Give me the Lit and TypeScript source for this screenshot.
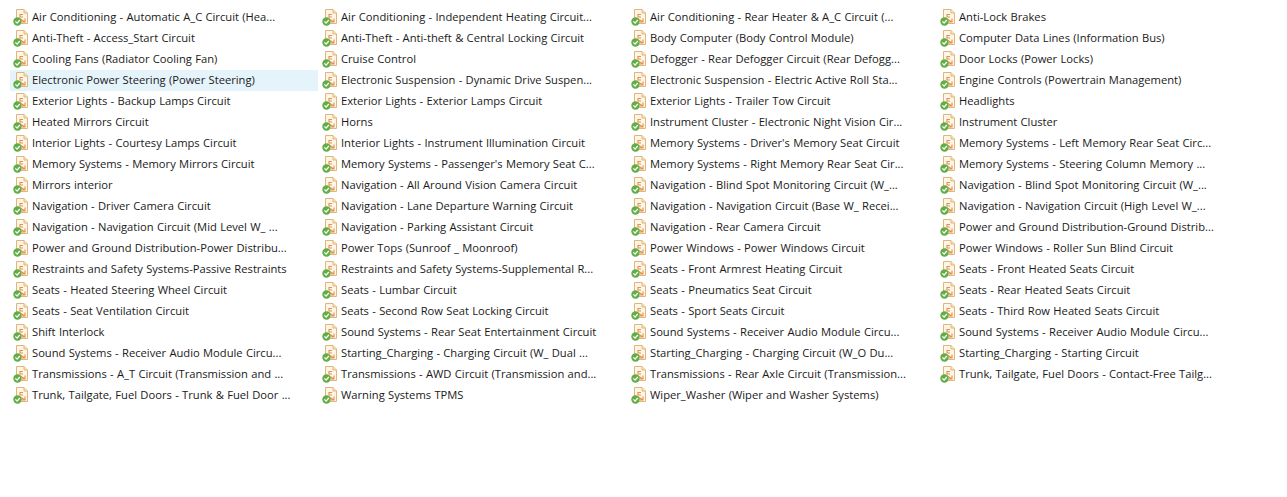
import { LitElement, html, css, svg } from "lit";
import { customElement } from "lit/decorators.js";

const items = [
"Air Conditioning - Automatic A_C Circuit (Hea...","Anti-Theft - Access_Start Circuit","Cooling Fans (Radiator Cooling Fan)","Electronic Power Steering (Power Steering)","Exterior Lights - Backup Lamps Circuit","Heated Mirrors Circuit","Interior Lights - Courtesy Lamps Circuit","Memory Systems - Memory Mirrors Circuit","Mirrors interior","Navigation - Driver Camera Circuit","Navigation - Navigation Circuit (Mid Level W_ ...","Power and Ground Distribution-Power Distribu...","Restraints and Safety Systems-Passive Restraints","Seats - Heated Steering Wheel Circuit","Seats - Seat Ventilation Circuit","Shift Interlock","Sound Systems - Receiver Audio Module Circu...","Transmissions - A_T Circuit (Transmission and ...","Trunk, Tailgate, Fuel Doors - Trunk & Fuel Door ...",
"Air Conditioning - Independent Heating Circuit...","Anti-Theft - Anti-theft & Central Locking Circuit","Cruise Control","Electronic Suspension - Dynamic Drive Suspen...","Exterior Lights - Exterior Lamps Circuit","Horns","Interior Lights - Instrument Illumination Circuit","Memory Systems - Passenger's Memory Seat C...","Navigation - All Around Vision Camera Circuit","Navigation - Lane Departure Warning Circuit","Navigation - Parking Assistant Circuit","Power Tops (Sunroof _ Moonroof)","Restraints and Safety Systems-Supplemental R...","Seats - Lumbar Circuit","Seats - Second Row Seat Locking Circuit","Sound Systems - Rear Seat Entertainment Circuit","Starting_Charging - Charging Circuit (W_ Dual ...","Transmissions - AWD Circuit (Transmission and...","Warning Systems TPMS",
"Air Conditioning - Rear Heater & A_C Circuit (...","Body Computer (Body Control Module)","Defogger - Rear Defogger Circuit (Rear Defogg...","Electronic Suspension - Electric Active Roll Sta...","Exterior Lights - Trailer Tow Circuit","Instrument Cluster - Electronic Night Vision Cir...","Memory Systems - Driver's Memory Seat Circuit","Memory Systems - Right Memory Rear Seat Cir...","Navigation - Blind Spot Monitoring Circuit (W_...","Navigation - Navigation Circuit (Base W_ Recei...","Navigation - Rear Camera Circuit","Power Windows - Power Windows Circuit","Seats - Front Armrest Heating Circuit","Seats - Pneumatics Seat Circuit","Seats - Sport Seats Circuit","Sound Systems - Receiver Audio Module Circu...","Starting_Charging - Charging Circuit (W_O Du...","Transmissions - Rear Axle Circuit (Transmission...","Wiper_Washer (Wiper and Washer Systems)",
"Anti-Lock Brakes","Computer Data Lines (Information Bus)","Door Locks (Power Locks)","Engine Controls (Powertrain Management)","Headlights","Instrument Cluster","Memory Systems - Left Memory Rear Seat Circ...","Memory Systems - Steering Column Memory ...","Navigation - Blind Spot Monitoring Circuit (W_...","Navigation - Navigation Circuit (High Level W_...","Power and Ground Distribution-Ground Distrib...","Power Windows - Roller Sun Blind Circuit","Seats - Front Heated Seats Circuit","Seats - Rear Heated Seats Circuit","Seats - Third Row Heated Seats Circuit","Sound Systems - Receiver Audio Module Circu...","Starting_Charging - Starting Circuit","Trunk, Tailgate, Fuel Doors - Contact-Free Tailg...",
];

const icon = svg`<svg class="ic" width="16" height="17" viewBox="0 0 16 17">
  <path d="M3.5 .5H11L14.5 4V14.5H3.5Z" fill="#fdf6e8" stroke="#e0b778"/>
  <path d="M11 .5V4H14.5" fill="#f7e2b8" stroke="#e0b778"/>
  <path d="M10 5.5H7V8H10M7 10L12 13M12 9.5V13H9" fill="none" stroke="#e58f4a" stroke-width="1.1"/>
  <circle cx="4.5" cy="12.5" r="4.2" fill="#62ad45"/>
  <path d="M2.4 12.4L4.1 14.1L6.8 11" fill="none" stroke="#fff" stroke-width="1.3"/>
</svg>`;

@customElement("app-root")
export class AppRoot extends LitElement {
  static styles = css`
    :host { display: block; width: 1287px; height: 497px; background: #fff; overflow: hidden; }
    .list {
      display: grid;
      grid-auto-flow: column;
      grid-template-rows: repeat(19, 21px);
      grid-auto-columns: 309px;
      padding: 7px 0 0 10px;
      font: 11.2px/20px "Open Sans", sans-serif;
      word-spacing: 0.4px;
      color: #1a1a1a;
    }
    .row {
      display: flex;
      align-items: center;
      width: 308px;
      padding-left: 3px;
      box-sizing: border-box;
      white-space: nowrap;
      overflow: hidden;
    }
    .row.sel { background: #e5f3fb; }
    .ic { flex: none; margin-right: 3px; }
    .t { display: block; height: 21px; line-height: 19px; }
  `;
  render() {
    return html`<div class="list">${items.map(
      (t, i) => html`<div class="row ${i === 3 ? "sel" : ""}">${icon}<span class="t">${t}</span></div>`
    )}</div>`;
  }
}
